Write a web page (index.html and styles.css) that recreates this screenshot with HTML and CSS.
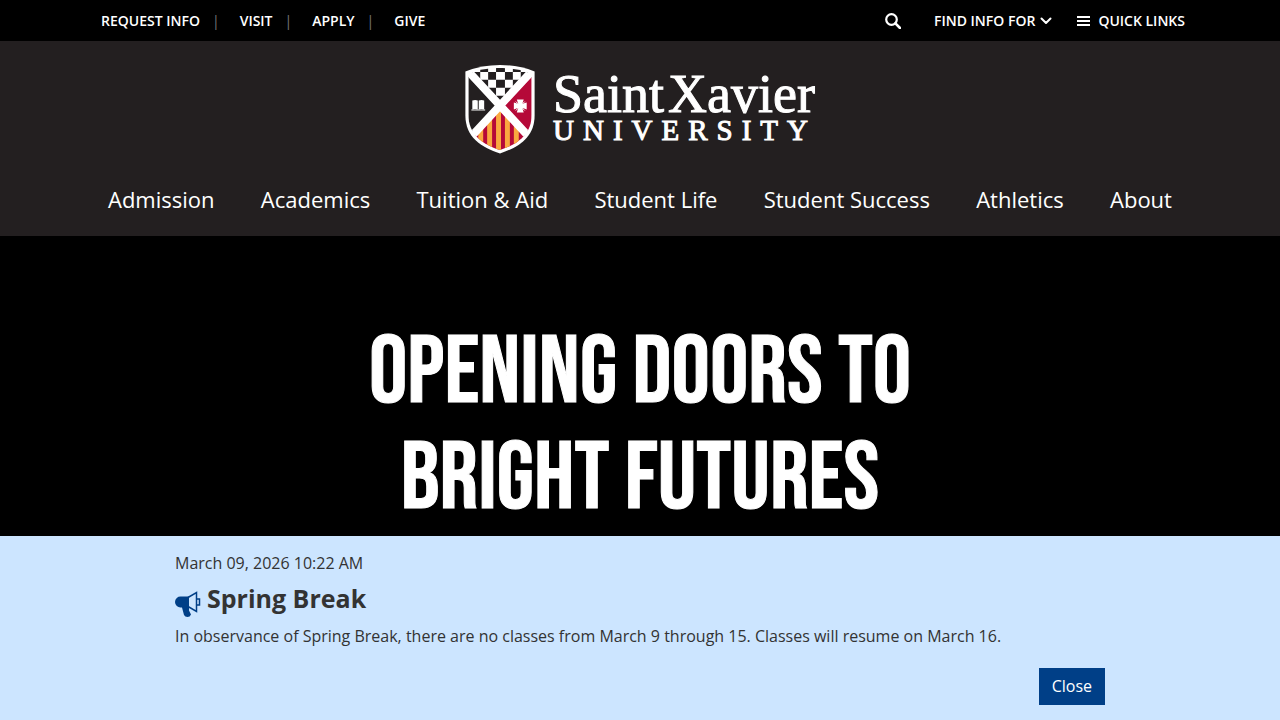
FILE: index.html
```html
<!DOCTYPE html>
<html lang="en">

    <head>
        <meta charset="UTF-8">
        <meta name="viewport" content="width=device-width, initial-scale=1">
        <title>Saint Xavier University</title>
        <link rel="stylesheet" href="styles.css">
    </head>

    <body>
        <!-- utility bar -->
        <div class="topbar">
            <div class="topbar-inner">
                <ul class="quick">
                    <li><a href="#">REQUEST INFO</a></li>
                    <li><a href="#">VISIT</a></li>
                    <li><a href="#">APPLY</a></li>
                    <li><a href="#">GIVE</a></li>
                </ul>
                <div class="tools">
                    <button type="button" class="search" aria-label="Search">
                        <svg width="16" height="16" viewBox="0 0 16 16"><circle cx="6.5" cy="6.5" r="5.3" fill="none" stroke="#fff" stroke-width="2.2"/><path d="M10.4 10.4L15 15" stroke="#fff" stroke-width="2.6" stroke-linecap="round"/></svg>
                    </button>
                    <button type="button" class="find">FIND INFO FOR
                        <svg width="12" height="8" viewBox="0 0 12 8"><path d="M1.5 1.5L6 6l4.500-4.500" fill="none" stroke="#fff" stroke-width="2" stroke-linecap="round" stroke-linejoin="round"/></svg>
                    </button>
                    <button type="button" class="links">
                        <svg width="13" height="12" viewBox="0 0 13 12"><path d="M0 2h13M0 6h13M0 10h13" stroke="#fff" stroke-width="2"/></svg>
                        QUICK LINKS
                    </button>
                </div>
            </div>
        </div>

        <header class="header">
            <a class="logo" href="#" aria-label="Saint Xavier University home">
                <svg class="shield" width="70" height="89" viewBox="0 0 70 90">
                    <defs>
                        <clipPath id="inner"><path d="M3 8.500Q18 3 35 3T67 8.500V50C67 70 53 80 35 86C17 80 3 70 3 50Z"/></clipPath>
                        <clipPath id="top"><path d="M0 0H70L35 38Z"/></clipPath>
                        <clipPath id="bottom"><path d="M35 44L73 86V90H-3V86Z"/></clipPath>
                    </defs>
                    <path d="M0 6.500Q17 0 35 0T70 6.500V51C70 73 54 83 35 89.500C16 83 0 73 0 51Z" fill="#fff"/>
                    <g clip-path="url(#inner)">
                        <path d="M0 9L32 41L0 74Z" fill="#231f20"/>
                        <path d="M70 9L38 41L70 74Z" fill="#b50938"/>
                        <g clip-path="url(#top)">
                            <path d="M15 2h8v5h-8zM31 2h9v5h-9zM48 2h8v5h-8zM7 7h8v8H7zM23 7h8v8h-8zM40 7h8v8h-8zM56 7h9v8h-9zM15 15h8v8h-8zM31 15h9v8h-9zM48 15h8v8h-8zM23 23h8v8h-8zM40 23h8v8h-8zM31 31h9v8h-9z" fill="#231f20"/>
                        </g>
                        <g clip-path="url(#bottom)">
                            <path d="M0 45h70v45H0z" fill="#b50938"/>
                            <path d="M13 45h5v45h-5zM22 45h5v45h-5zM31 45h5v45h-5zM40 45h5v45h-5zM49 45h5v45h-5z" fill="#f9a83f"/>
                        </g>
                        <path d="M-3 0L73 82M73 0L-3 82" stroke="#fff" stroke-width="8"/>
                    </g>
                    <path d="M7 36q3-1 5.500 0v9q-3-1-5.500 0zM13.500 36q3-1 5.500 0v9q-3-1-5.500 0z" fill="#fff"/>
                    <path d="M6 45.500h14" stroke="#fff"/>
                    <path d="M52 35h7q-1 3-1.500 4.500Q59 39 62 38v7q-3-1-4.500-1.500Q58 45 59 48h-7q1-3 1.500-4.500Q52 44 49 45v-7q3 1 4.500 1.500Q53 38 52 35z" fill="#fff"/>
                    <path d="M51 37l9 9M60 37l-9 9" stroke="#fff"/>
                </svg>
                <span class="wordmark">
                    <span class="name"><span>Saint</span><span>Xavier</span></span>
                    <span class="univ">UNIVERSITY</span>
                </span>
            </a>
            <nav class="nav">
                <a href="#">Admission</a>
                <a href="#">Academics</a>
                <a href="#">Tuition &amp; Aid</a>
                <a href="#">Student Life</a>
                <a href="#">Student Success</a>
                <a href="#">Athletics</a>
                <a href="#">About</a>
            </nav>
        </header>

        <main class="hero">
            <h1>OPENING DOORS TO<br>BRIGHT FUTURES</h1>
        </main>

        <!-- campus alert, pinned over the page -->
        <section class="alert">
            <div class="alert-inner">
                <p>March 09, 2026 10:22 AM</p>
                <h2>
                    <svg width="26" height="26" viewBox="0 0 26 26"><path d="M14 5.500H6a5.500 5.500 0 0 0-6 5.500a5.500 5.500 0 0 0 6 5.500l1 0 2 7.500q1 2 3.500 2t3.500-2.500l-2-4 0-3z" fill="#003f87"/><path d="M13 6.500L21.500 1.500V20.500L13 15.500M22 8h2.500v6H22" fill="none" stroke="#003f87" stroke-width="1.500"/></svg>
                    Spring Break
                </h2>
                <p>In observance of Spring Break, there are no classes from March 9 through 15. Classes will resume on March 16.</p>
                <button type="button" class="close">Close</button>
            </div>
        </section>
    </body>
</html>
```
FILE: styles.css
```css
* {
    box-sizing: border-box;
}

body {
    margin: 0;
    background-color: #000;
    font-family: "Open Sans", sans-serif;
    font-size: 16px;
    line-height: 24px;
}

a {
    color: white;
    text-decoration: none;
}

button {
    border: 0;
    font-family: inherit;
    cursor: pointer;
}

/* top bar */
.topbar {
    background-color: #000;
    padding: 9px 16px 8px;
}

.topbar-inner {
    display: flex;
    justify-content: space-between;
    max-width: 1090px;
    margin: 0 auto;
    padding-left: 6px;
}

.quick {
    display: flex;
    margin: 0;
    padding: 0;
    list-style: none;
    font-size: 14px;
    font-weight: 600;
}

.quick li + li::before {
    content: "|";
    color: #777;
    font-weight: 400;
    padding: 0 20px 0 12px;
}

.tools {
    display: flex;
}

.tools button {
    display: flex;
    align-items: center;
    padding: 0;
    background: none;
    color: white;
    font-size: 14px;
    font-weight: 600;
    line-height: 24px;
}

.tools .search {
    margin-right: 33px;
}

.tools .find {
    gap: 5px;
    margin-right: 25px;
}

.tools .links {
    gap: 8px;
}

/* header */
.header {
    background-color: #231f20;
    padding: 24px 16px 18px;
}

.logo {
    display: flex;
    justify-content: center;
    gap: 18px;
}

.wordmark {
    display: flex;
    flex-direction: column;
    font-family: "Liberation Serif", serif;
    padding-top: 5px;
}

.name {
    display: flex;
    gap: 4px;
    font-size: 54px;
    line-height: 48px;
    -webkit-text-stroke: 1px white;
}

/* tracked capitals; the margin drops the space after the last one */
.univ {
    margin-right: -9px;
    font-size: 29px;
    line-height: 24px;
    letter-spacing: 9px;
    -webkit-text-stroke: 1px white;
}

.nav {
    display: flex;
    justify-content: space-between;
    max-width: 1064px;
    margin: 26px auto 0;
    font-size: 22px;
    line-height: 38px;
}

/* hero */
.hero {
    padding: 85px 16px;
}

.hero h1 {
    margin: 0;
    color: white;
    font-family: "Bebas Neue", "Liberation Sans Narrow", sans-serif;
    font-size: 96px;
    font-weight: 400;
    line-height: 106px;
    text-align: center;
    -webkit-text-stroke: 1px white;
}

/* alert */
.alert {
    position: fixed;
    left: 0;
    right: 0;
    bottom: 0;
    background-color: #cce5ff;
    color: #333;
    padding: 15px 16px;
}

.alert-inner {
    display: flex;
    flex-direction: column;
    max-width: 930px;
    margin: 0 auto;
}

.alert p {
    margin: 0;
}

.alert h2 {
    display: flex;
    align-items: flex-start;
    gap: 6px;
    margin: 7px 0;
    font-size: 25px;
    line-height: 32px;
}

.alert h2 svg {
    margin-top: 9px;
}

.close {
    align-self: flex-end;
    margin-top: 20px;
    padding: 6px 13px 7px;
    background-color: #003f87;
    color: white;
    font-size: 16px;
    line-height: 24px;
}
```
